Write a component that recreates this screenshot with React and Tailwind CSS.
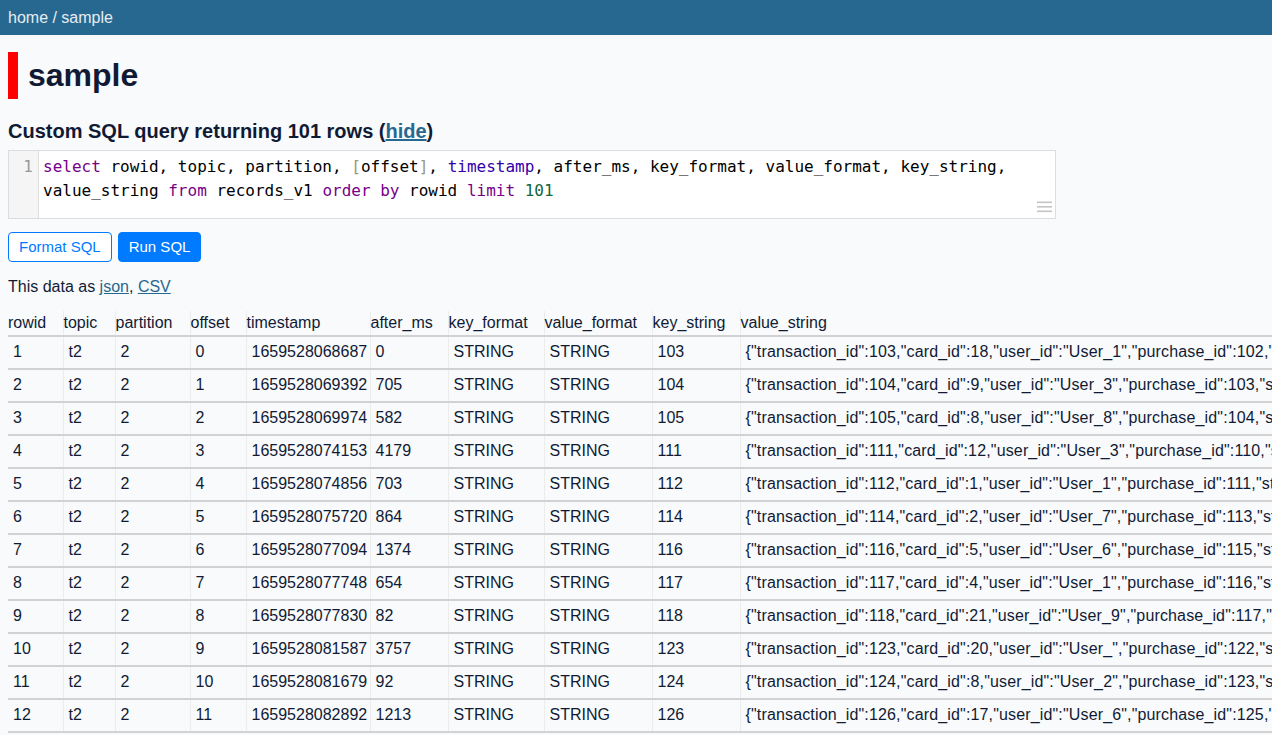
import React from 'react';

const COLUMNS = [
  { key: 'rowid', w: 'w-[55px]' },
  { key: 'topic', w: 'w-[52px]' },
  { key: 'partition', w: 'w-[75px]' },
  { key: 'offset', w: 'w-[56px]' },
  { key: 'timestamp', w: 'w-[124px]' },
  { key: 'after_ms', w: 'w-[78px]' },
  { key: 'key_format', w: 'w-[96px]' },
  { key: 'value_format', w: 'w-[108px]' },
  { key: 'key_string', w: 'w-[88px]' },
  { key: 'value_string', w: 'w-[1200px]' },
];

const STORES = ['Store_4', 'Store_2', 'Store_9', 'Store_1', 'Store_5', 'Store_3', 'Store_7'];

// rowid, offset, timestamp, after_ms, key, card, user, purchase
const RAW = [
  [1, 0, '1659528068687', 0, 103, 18, 'User_1', 102],
  [2, 1, '1659528069392', 705, 104, 9, 'User_3', 103],
  [3, 2, '1659528069974', 582, 105, 8, 'User_8', 104],
  [4, 3, '1659528074153', 4179, 111, 12, 'User_3', 110],
  [5, 4, '1659528074856', 703, 112, 1, 'User_1', 111],
  [6, 5, '1659528075720', 864, 114, 2, 'User_7', 113],
  [7, 6, '1659528077094', 1374, 116, 5, 'User_6', 115],
  [8, 7, '1659528077748', 654, 117, 4, 'User_1', 116],
  [9, 8, '1659528077830', 82, 118, 21, 'User_9', 117],
  [10, 9, '1659528081587', 3757, 123, 20, 'User_', 122],
  [11, 10, '1659528081679', 92, 124, 8, 'User_2', 123],
  [12, 11, '1659528082892', 1213, 126, 17, 'User_6', 125],
];

const ROWS = RAW.map(([rowid, offset, ts, after, key, card, user, purchase], i) => ({
  rowid,
  topic: 't2',
  partition: 2,
  offset,
  timestamp: ts,
  after_ms: after,
  key_format: 'STRING',
  value_format: 'STRING',
  key_string: key,
  value_string: `{"transaction_id":${key},"card_id":${card},"user_id":"${user}","purchase_id":${purchase},"store_id":"${STORES[i % STORES.length]}"}`,
}));

function ResizeHandle() {
  return (
    <svg width="15" height="12" viewBox="0 0 15 12" className="absolute bottom-[5px] right-[3px]">
      <rect x="0" y="0.5" width="15" height="1.6" fill="#c4c4c4" />
      <rect x="0" y="5" width="15" height="1.6" fill="#c4c4c4" />
      <rect x="0" y="9.5" width="15" height="1.6" fill="#c4c4c4" />
    </svg>
  );
}

function SqlEditor() {
  return (
    <div className="relative flex h-[69px] w-[1048px] border border-[#dddddd] bg-white font-['DejaVu_Sans_Mono',monospace] text-[16px] leading-[24px]">
      <div className="w-[30px] shrink-0 border-r border-[#dddddd] bg-[#f5f5f5] pr-[5px] pt-[4px] text-right text-[#999999]">
        1
      </div>
      <div className="whitespace-pre pl-[4px] pt-[4px] text-black">
        <div>
          <span className="text-[#770088]">select</span> rowid, topic, partition,{' '}
          <span className="text-[#999977]">[</span>offset<span className="text-[#999977]">]</span>,{' '}
          <span className="text-[#3300aa]">timestamp</span>, after_ms, key_format, value_format, key_string,
        </div>
        <div>
          value_string <span className="text-[#770088]">from</span> records_v1{' '}
          <span className="text-[#770088]">order by</span> rowid{' '}
          <span className="text-[#770088]">limit</span> <span className="text-[#116644]">101</span>
        </div>
      </div>
      <ResizeHandle />
    </div>
  );
}

export default function App() {
  return (
    <div className="h-screen w-full overflow-hidden bg-[#f8fafb] font-['Liberation_Sans',Arial,sans-serif] text-[16px] leading-[24px] text-[#111a35]">
      <header className="flex h-[35px] items-center bg-[#276890] px-2 text-[#e6edf2]">
        home / sample
      </header>

      <div className="px-2">
        <h1 className="mt-[17px] border-l-[10px] border-[#ff0000] pl-[10px] text-[32px] font-bold leading-[47px]">
          sample
        </h1>

        <h3 className="mt-[17px] text-[20px] font-bold leading-[30px]">
          Custom SQL query returning 101 rows (
          <a href="#" className="text-[#276890] underline">
            hide
          </a>
          )
        </h3>

        <div className="mt-[4px]">
          <SqlEditor />
        </div>

        <div className="mt-[13px] flex gap-[6px]">
          <button
            type="button"
            className="h-[30px] rounded-[4px] border border-[#007bff] bg-white px-[10px] text-[15px] text-[#007bff]"
          >
            Format SQL
          </button>
          <button
            type="button"
            className="h-[30px] rounded-[4px] border border-[#007bff] bg-[#007bff] px-[10px] text-[15px] text-white"
          >
            Run SQL
          </button>
        </div>

        <p className="mt-[13px]">
          This data as{' '}
          <a href="#" className="text-[#276890] underline">
            json
          </a>
          ,{' '}
          <a href="#" className="text-[#276890] underline">
            CSV
          </a>
        </p>

        <table className="mt-[12px] w-[1932px] table-fixed border-collapse">
          <thead>
            <tr>
              {COLUMNS.map((c) => (
                <th
                  key={c.key}
                  className={`${c.w} whitespace-nowrap border-r border-r-[#ececec] p-0 text-left font-normal`}
                >
                  {c.key}
                </th>
              ))}
            </tr>
          </thead>
          <tbody>
            {ROWS.map((row) => (
              <tr key={row.rowid}>
                {COLUMNS.map((c) => (
                  <td
                    key={c.key}
                    className={
                      c.key === 'value_string'
                        ? 'whitespace-nowrap border-y-2 border-r border-y-[#d2d2d2] border-r-[#ececec] px-[5px] pb-[4px] pt-[3px] align-top tracking-[0.15px]'
                        : 'whitespace-nowrap border-y-2 border-r border-y-[#d2d2d2] border-r-[#ececec] px-[5px] pb-[4px] pt-[3px] align-top'
                    }
                  >
                    {row[c.key]}
                  </td>
                ))}
              </tr>
            ))}
          </tbody>
        </table>
      </div>
    </div>
  );
}
